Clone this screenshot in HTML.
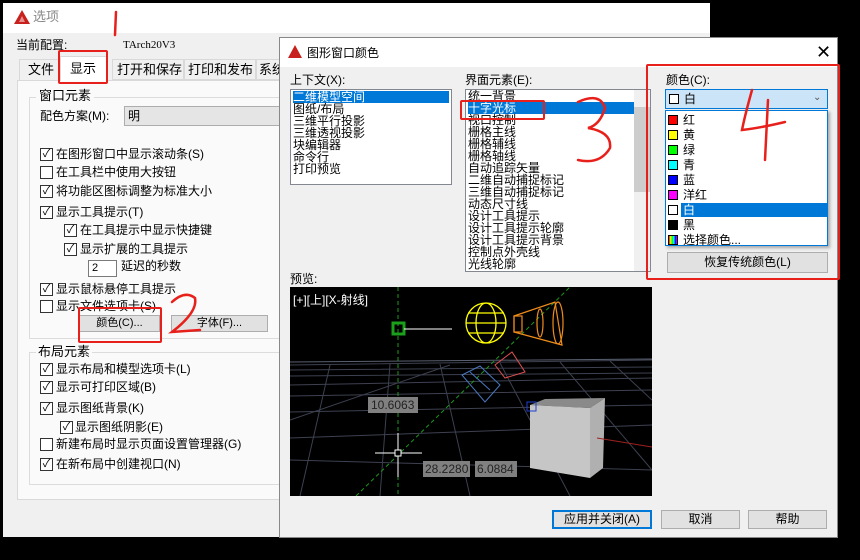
<!DOCTYPE html>
<html><head><meta charset="utf-8"><style>
*{margin:0;padding:0;box-sizing:border-box}
body{width:860px;height:560px;background:#000;position:relative;overflow:hidden;font-family:"Liberation Sans","Noto Sans CJK SC",sans-serif;font-size:12px;color:#000}
.a{position:absolute;white-space:nowrap;line-height:14px}
.cb{position:absolute;width:13px;height:13px;border:1px solid #333;background:#fff;font-size:11px;line-height:11px;text-align:center}
.btn{position:absolute;background:#e1e1e1;border:1px solid #adadad;text-align:center;line-height:16px}
.r{position:absolute;border:2px solid #e8201c;border-radius:2px}
.li{position:absolute;left:2px;right:2px;height:12px;line-height:12px;font-size:12px}
.sw{display:inline-block;width:10px;height:10px;border:1px solid #000;vertical-align:-1px;margin-right:5px}
</style></head><body>
<!-- left dialog -->
<div style="position:absolute;left:3px;top:3px;width:707px;height:534px;background:#f0f0f0">
 <div style="position:absolute;left:0;top:0;width:707px;height:30px;background:#fff"></div>
</div>
<svg style="position:absolute;left:13px;top:9px" width="18" height="16"><path d="M9 1 L17 15 L1 15 Z" fill="#c8201c"/><path d="M9 7 L12 13 L6 13Z" fill="#fff" opacity=".5"/></svg>
<div class="a" style="left:33px;top:10px;color:#888;font-size:13px">选项</div>
<div class="a" style="left:16px;top:38px">当前配置:</div>
<div class="a" style="left:123px;top:38px;font-family:'Liberation Serif',serif;font-size:11px">TArch20V3</div>
<div style="position:absolute;left:16px;top:80px;width:264px;height:150px"></div>
<div style="position:absolute;left:17px;top:80px;width:270px;height:420px;border:1px solid #d9d9d9;background:#fafafa"></div>
<div style="position:absolute;left:19px;top:59px;width:40px;height:21px;border:1px solid #d9d9d9;border-bottom:none;background:#f0f0f0"></div>
<div class="a" style="left:28px;top:63px;font-size:13px">文件</div>
<div style="position:absolute;left:60px;top:56px;width:48px;height:25px;border:1px solid #d9d9d9;border-bottom:none;background:#fff"></div>
<div class="a" style="left:70px;top:62px;font-size:13px">显示</div>
<div style="position:absolute;left:112px;top:59px;width:72px;height:21px;border:1px solid #d9d9d9;background:#f0f0f0"></div>
<div class="a" style="left:117px;top:63px;font-size:13px">打开和保存</div>
<div style="position:absolute;left:184px;top:59px;width:72px;height:21px;border:1px solid #d9d9d9;background:#f0f0f0"></div>
<div class="a" style="left:188px;top:63px;font-size:13px">打印和发布</div>
<div style="position:absolute;left:256px;top:59px;width:30px;height:21px;border:1px solid #d9d9d9;background:#f0f0f0"></div>
<div class="a" style="left:259px;top:63px;font-size:13px">系统</div>
<div style="position:absolute;left:29px;top:97px;width:260px;height:242px;border:1px solid #dcdcdc"></div>
<div class="a" style="left:36px;top:89px;background:#fafafa;padding:0 3px;font-size:13px">窗口元素</div>
<div class="a" style="left:40px;top:109px">配色方案(M):</div>
<div style="position:absolute;left:124px;top:106px;width:160px;height:20px;border:1px solid #adadad;background:#e5e5e5"></div>
<div class="a" style="left:128px;top:109px">明</div>
<div class="cb" style="left:40px;top:148px">✓</div><div class="a" style="left:56px;top:147px">在图形窗口中显示滚动条(S)</div>
<div class="cb" style="left:40px;top:166px"></div><div class="a" style="left:56px;top:165px">在工具栏中使用大按钮</div>
<div class="cb" style="left:40px;top:185px">✓</div><div class="a" style="left:56px;top:184px">将功能区图标调整为标准大小</div>
<div class="cb" style="left:40px;top:206px">✓</div><div class="a" style="left:56px;top:205px">显示工具提示(T)</div>
<div class="cb" style="left:64px;top:224px">✓</div><div class="a" style="left:80px;top:223px">在工具提示中显示快捷键</div>
<div class="cb" style="left:64px;top:243px">✓</div><div class="a" style="left:80px;top:242px">显示扩展的工具提示</div>
<div style="position:absolute;left:88px;top:260px;width:29px;height:17px;border:1px solid #7a7a7a;background:#fff;font-size:11px;padding-left:3px;line-height:15px">2</div>
<div class="a" style="left:121px;top:259px">延迟的秒数</div>
<div class="cb" style="left:40px;top:283px">✓</div><div class="a" style="left:56px;top:282px">显示鼠标悬停工具提示</div>
<div class="cb" style="left:40px;top:300px"></div><div class="a" style="left:56px;top:299px">显示文件选项卡(S)</div>
<div class="btn" style="left:79px;top:315px;width:81px;height:17px;font-size:11px;line-height:15px">颜色(C)...</div>
<div class="btn" style="left:171px;top:315px;width:97px;height:17px;font-size:11px;line-height:15px">字体(F)...</div>
<div style="position:absolute;left:29px;top:352px;width:260px;height:133px;border:1px solid #dcdcdc"></div>
<div class="a" style="left:36px;top:345px;background:#fafafa;padding:0 2px;font-size:13px">布局元素</div>
<div class="cb" style="left:40px;top:363px">✓</div><div class="a" style="left:56px;top:362px">显示布局和模型选项卡(L)</div>
<div class="cb" style="left:40px;top:381px">✓</div><div class="a" style="left:56px;top:380px">显示可打印区域(B)</div>
<div class="cb" style="left:40px;top:402px">✓</div><div class="a" style="left:56px;top:401px">显示图纸背景(K)</div>
<div class="cb" style="left:60px;top:421px">✓</div><div class="a" style="left:75px;top:420px">显示图纸阴影(E)</div>
<div class="cb" style="left:40px;top:438px"></div><div class="a" style="left:56px;top:437px">新建布局时显示页面设置管理器(G)</div>
<div class="cb" style="left:40px;top:458px">✓</div><div class="a" style="left:56px;top:457px">在新布局中创建视口(N)</div>

<!-- right dialog -->
<div style="position:absolute;left:279px;top:37px;width:559px;height:501px;background:#f0f0f0;border:1px solid #888">
 <div style="position:absolute;left:0;top:0;width:557px;height:29px;background:#fff"></div>
</div>
<svg style="position:absolute;left:288px;top:45px" width="14" height="13"><path d="M7 0 L14 13 L0 13 Z" fill="#c8201c"/></svg>
<div class="a" style="left:307px;top:46px">图形窗口颜色</div>
<div class="a" style="left:816px;top:42px;font-size:18px;line-height:20px">✕</div>
<div class="a" style="left:290px;top:73px">上下文(X):</div>
<div style="position:absolute;left:290px;top:89px;width:162px;height:96px;border:1px solid #828790;background:#fff">
 <div class="li" style="top:1px;background:#0078d7;color:#fff">二维模型空间</div>
 <div class="li" style="top:13px">图纸/布局</div>
 <div class="li" style="top:25px">三维平行投影</div>
 <div class="li" style="top:37px">三维透视投影</div>
 <div class="li" style="top:49px">块编辑器</div>
 <div class="li" style="top:61px">命令行</div>
 <div class="li" style="top:73px">打印预览</div>
</div>
<div class="a" style="left:465px;top:73px">界面元素(E):</div>
<div style="position:absolute;left:465px;top:89px;width:186px;height:183px;border:1px solid #828790;background:#fff;overflow:hidden">
 <div class="li" style="top:0px">统一背景</div>
 <div class="li" style="top:12px;right:16px;background:#0078d7;color:#fff">十字光标</div>
 <div class="li" style="top:24px">视口控制</div>
 <div class="li" style="top:36px">栅格主线</div>
 <div class="li" style="top:48px">栅格辅线</div>
 <div class="li" style="top:60px">栅格轴线</div>
 <div class="li" style="top:72px">自动追踪矢量</div>
 <div class="li" style="top:84px">二维自动捕捉标记</div>
 <div class="li" style="top:96px">三维自动捕捉标记</div>
 <div class="li" style="top:108px">动态尺寸线</div>
 <div class="li" style="top:120px">设计工具提示</div>
 <div class="li" style="top:132px">设计工具提示轮廓</div>
 <div class="li" style="top:144px">设计工具提示背景</div>
 <div class="li" style="top:156px">控制点外壳线</div>
 <div class="li" style="top:168px">光线轮廓</div>
 <div style="position:absolute;right:0;top:0;width:16px;height:181px;background:#f0f0f0"></div>
 <div style="position:absolute;right:0;top:17px;width:16px;height:85px;background:#cdcdcd"></div>
</div>
<div class="a" style="left:666px;top:73px">颜色(C):</div>
<div style="position:absolute;left:665px;top:89px;width:163px;height:20px;border:1px solid #0078d7;background:#cce4f7"></div>
<div class="a" style="left:669px;top:92px"><span class="sw" style="background:#fff"></span>白</div>
<div class="a" style="left:813px;top:91px;font-size:10px;color:#555">⌄</div>
<div style="position:absolute;left:665px;top:110px;width:163px;height:136px;border:1px solid #0078d7;background:#fff;box-shadow:2px 2px 3px rgba(0,0,0,.3)">
 <div class="li" style="top:2px;height:15px;line-height:15px"><span class="sw" style="background:#f00"></span>红</div>
 <div class="li" style="top:17px;height:15px;line-height:15px"><span class="sw" style="background:#ff0"></span>黄</div>
 <div class="li" style="top:32px;height:15px;line-height:15px"><span class="sw" style="background:#0f0"></span>绿</div>
 <div class="li" style="top:47px;height:15px;line-height:15px"><span class="sw" style="background:#0ff"></span>青</div>
 <div class="li" style="top:62px;height:15px;line-height:15px"><span class="sw" style="background:#00f"></span>蓝</div>
 <div class="li" style="top:77px;height:15px;line-height:15px"><span class="sw" style="background:#f0f"></span>洋红</div>
 <div style="position:absolute;left:15px;right:0;top:92px;height:14px;background:#0078d7"></div>
 <div class="li" style="top:92px;height:15px;line-height:15px"><span class="sw" style="background:#fff"></span><span style="color:#fff">白</span></div>
 <div class="li" style="top:107px;height:15px;line-height:15px"><span class="sw" style="background:#000"></span>黑</div>
 <div class="li" style="top:122px;height:15px;line-height:15px"><span class="sw" style="background:linear-gradient(90deg,#f00,#ff0,#0f0,#0ff,#00f,#f0f)"></span>选择颜色...</div>
</div>
<div class="btn" style="left:667px;top:252px;width:161px;height:21px;line-height:19px">恢复传统颜色(L)</div>
<div class="a" style="left:290px;top:272px">预览:</div>
<svg style="position:absolute;left:290px;top:287px" width="362" height="209" viewBox="290 287 362 209">
 <rect x="290" y="287" width="362" height="209" fill="#000"/>
 <g stroke="#3d4150" stroke-width="1" fill="none">
  <path d="M290 365 L652 360 M290 370 L652 367 M290 376 L652 373 M290 385 L652 378 M290 396 L652 390 M290 412 L652 405 M290 438 L652 425 M290 460 L652 470"/>
  <path d="M330 365 L300 496 M390 364 L380 496 M440 364 L470 496 M500 363 L570 496 M560 362 L652 470 M610 361 L652 400 M290 420 L450 365"/>
 </g>
 <g stroke="#5a6070" fill="none"><path d="M290 362 L652 359"/></g>
 <line x1="398" y1="287" x2="398" y2="496" stroke="#1c9a1c" stroke-dasharray="4 3"/>
 <line x1="356" y1="496" x2="570" y2="287" stroke="#1c9a1c" stroke-dasharray="4 3"/>
 <rect x="393" y="323" width="11" height="11" fill="none" stroke="#1aa01a" stroke-width="3"/>
 <line x1="404" y1="329" x2="452" y2="329" stroke="#fff"/>
 <g stroke="#ff0" fill="none" stroke-width="1.3"><circle cx="486" cy="323" r="20"/><ellipse cx="486" cy="323" rx="10" ry="20"/><path d="M466 323 H506 M468 313 H504 M468 333 H504"/></g>
 <g stroke="#f08c1c" fill="none" stroke-width="1.2"><path d="M514 316 L555 302 L562 345 L514 332 Z"/><ellipse cx="558" cy="323" rx="5" ry="21"/><ellipse cx="540" cy="323" rx="3" ry="14"/><rect x="514" y="316" width="8" height="16"/></g>
 <g stroke="#4a78c0" fill="none"><path d="M462 375 L480 366 L500 385 L485 402 Z M470 372 L490 390"/></g>
 <g stroke="#e05050" fill="none"><path d="M495 365 L512 352 L525 372 L505 378 Z"/></g>
 <rect x="368" y="397" width="50" height="16" fill="#808080"/>
 <text x="371" y="409" font-size="12" fill="#222" font-family="Liberation Sans">10.6063</text>
 <path d="M530 405 L545 399 L605 398 L590 408 Z" fill="#8a8a8a"/>
 <path d="M530 405 L590 408 L590 478 L530 468 Z" fill="#c6c6c6"/>
 <path d="M590 408 L605 398 L603 468 L590 478 Z" fill="#b0b0b0"/>
 <rect x="527" y="402" width="9" height="9" fill="none" stroke="#2040d0"/>
 <line x1="597" y1="438" x2="652" y2="447" stroke="#a02020"/>
 <line x1="375" y1="453" x2="422" y2="453" stroke="#fff"/>
 <line x1="398" y1="433" x2="398" y2="477" stroke="#fff"/>
 <rect x="395" y="450" width="6" height="6" fill="#000" stroke="#fff"/>
 <rect x="423" y="461" width="47" height="16" fill="#808080"/>
 <text x="425" y="473" font-size="12" fill="#222" font-family="Liberation Sans">28.2280</text>
 <rect x="475" y="461" width="42" height="16" fill="#808080"/>
 <text x="477" y="473" font-size="12" fill="#222" font-family="Liberation Sans">6.0884</text>
 <text x="293" y="304" font-size="12" fill="#fff" font-family="Liberation Sans,Noto Sans CJK SC">[+][上][X-射线]</text>
</svg>
<div class="btn" style="left:552px;top:510px;width:100px;height:19px;border:2px solid #0078d7;line-height:15px">应用并关闭(A)</div>
<div class="btn" style="left:661px;top:510px;width:79px;height:19px">取消</div>
<div class="btn" style="left:748px;top:510px;width:79px;height:19px">帮助</div>

<!-- annotations -->
<svg style="position:absolute;left:0;top:0" width="860" height="560">
 <g stroke="#e8201c" stroke-width="2.5" fill="none" stroke-linecap="round">
  <path d="M116 12 L115 35"/>
  <path d="M172 302 Q185 290 195 298 Q198 312 172 332 L200 330"/>
  <path d="M578 102 Q600 92 605 108 Q600 125 588 128 Q612 132 610 148 Q600 165 578 160"/>
  <path d="M752 90 Q745 115 742 130 Q760 128 785 122 M768 100 L765 160"/>
 </g>
</svg>
<div class="r" style="left:58px;top:50px;width:50px;height:34px"></div>
<div class="r" style="left:78px;top:307px;width:84px;height:36px"></div>
<div class="r" style="left:460px;top:100px;width:85px;height:20px"></div>
<div class="r" style="left:646px;top:64px;width:194px;height:216px"></div>
</body></html>
